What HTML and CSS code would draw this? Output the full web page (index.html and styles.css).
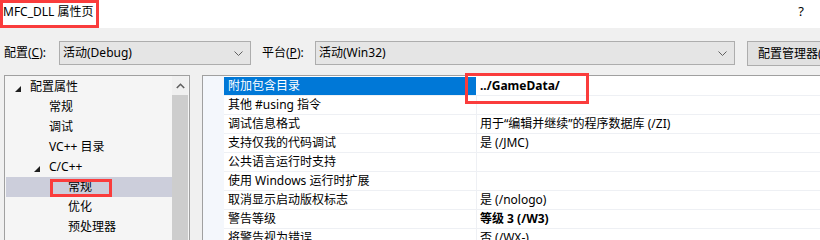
FILE: index.html
```html
<!DOCTYPE html>
<html lang="zh-CN">
<head>
  <meta charset="UTF-8" />
  <title>MFC_DLL 属性页</title>
  <link rel="stylesheet" href="styles.css">
</head>
<body>
  <div class="titlebar">
    <span class="title">MFC_DLL 属性页</span>
    <span class="help">?</span>
  </div>

  <div class="toolbar">
    <label class="field-label first">配置(<u>C</u>):</label>
    <div class="combo config">
      <span>活动(Debug)</span>
      <svg class="chev" width="9" height="5" viewBox="0 0 9 5"><polyline points="0.5,0.5 4.5,4.5 8.5,0.5" fill="none" stroke="#606060" stroke-width="1"/></svg>
    </div>
    <label class="field-label">平台(<u>P</u>):</label>
    <div class="combo platform">
      <span>活动(Win32)</span>
      <svg class="chev" width="9" height="5" viewBox="0 0 9 5"><polyline points="0.5,0.5 4.5,4.5 8.5,0.5" fill="none" stroke="#606060" stroke-width="1"/></svg>
    </div>
    <button class="manager">配置管理器(O)</button>
  </div>

  <div class="main">
    <div class="tree">
      <div class="tree-rows">
        <div class="node lvl0"><span class="exp"></span>配置属性</div>
        <div class="node lvl1">常规</div>
        <div class="node lvl1">调试</div>
        <div class="node lvl1">VC++ 目录</div>
        <div class="node lvl1"><span class="exp"></span>C/C++</div>
        <div class="node lvl2 selected">常规<span class="mark tree-mark"></span></div>
        <div class="node lvl2">优化</div>
        <div class="node lvl2">预处理器</div>
      </div>
      <div class="scrollbar">
        <div class="sb-up">
          <svg width="9" height="6" viewBox="0 0 9 6"><polyline points="0.8,5 4.5,1.3 8.2,5" fill="none" stroke="#606060" stroke-width="1.6"/></svg>
        </div>
        <div class="sb-thumb"></div>
      </div>
    </div>

    <div class="grid">
      <div class="gutter"></div>
      <div class="rows">
        <div class="row">
          <div class="name active">附加包含目录</div>
          <div class="value bold">../GameData/<span class="mark value-mark"></span></div>
        </div>
        <div class="row"><div class="name">其他 #using 指令</div><div class="value"></div></div>
        <div class="row"><div class="name">调试信息格式</div><div class="value">用于“编辑并继续”的程序数据库 (/ZI)</div></div>
        <div class="row"><div class="name">支持仅我的代码调试</div><div class="value">是 (/JMC)</div></div>
        <div class="row"><div class="name">公共语言运行时支持</div><div class="value"></div></div>
        <div class="row"><div class="name">使用 Windows 运行时扩展</div><div class="value"></div></div>
        <div class="row"><div class="name">取消显示启动版权标志</div><div class="value">是 (/nologo)</div></div>
        <div class="row"><div class="name">警告等级</div><div class="value bold">等级 3 (/W3)</div></div>
        <div class="row"><div class="name">将警告视为错误</div><div class="value">否 (/WX-)</div></div>
      </div>
    </div>
  </div>
</body>
</html>
```

FILE: styles.css
```css
body {
  margin: 0;
  width: 820px;
  height: 240px;
  overflow: hidden;
  background: #f0f0f0;
  color: #000;
  font-family: "Noto Sans", "Noto Sans CJK SC", sans-serif;
  font-size: 12px;
  line-height: 16px;
}
.titlebar {
  height: 28px;
  background: #fff;
  display: flex;
  justify-content: space-between;
}
.title {
  box-sizing: border-box;
  width: 99px;
  height: 28px;
  border: 3px solid #fa3c3c;
  padding: 1px 0 0 0;
  white-space: nowrap;
  overflow: hidden;
}
.help {
  padding: 3px 16px 0 0;
  font-size: 13px;
}
.toolbar {
  height: 47px;
  box-sizing: border-box;
  padding-top: 13px;
  display: flex;
  align-items: flex-start;
  white-space: nowrap;
  overflow: hidden;
}
.field-label {
  flex-shrink: 0;
  height: 24px;
  line-height: 24px;
  width: 53px;
}
.field-label.first {
  margin-left: 4px;
  width: 55px;
}
.combo {
  flex-shrink: 0;
  box-sizing: border-box;
  height: 24px;
  border: 1px solid #adadad;
  background: #e5e5e5;
  display: flex;
  align-items: center;
  justify-content: space-between;
  padding: 0 7px 0 3px;
}
.combo.config {
  width: 192px;
  margin-right: 11px;
}
.combo.platform {
  width: 420px;
  margin-right: 12px;
}
.manager {
  box-sizing: border-box;
  height: 25px;
  width: 100px;
  flex-shrink: 0;
  border: 1px solid #adadad;
  background: #e1e1e1;
  font: inherit;
  text-align: left;
  padding: 0 0 0 10px;
  white-space: nowrap;
  overflow: hidden;
}
.main {
  display: flex;
  height: 165px;
}
.tree {
  box-sizing: border-box;
  width: 186px;
  margin-left: 4px;
  border: 1px solid #a0a0a0;
  border-bottom: none;
  background: #f5f5f5;
  display: flex;
  padding: 0 1px 0 1px;
}
.tree-rows {
  width: 166px;
  padding-top: 1px;
}
.node {
  position: relative;
  height: 20px;
  line-height: 20px;
  white-space: nowrap;
}
.lvl0 { padding-left: 24px; }
.lvl1 { padding-left: 43px; }
.lvl2 { padding-left: 62px; }
.exp {
  position: absolute;
  top: 9px;
  width: 0;
  height: 0;
  border-left: 6px solid transparent;
  border-bottom: 6px solid #1e1e1e;
}
.lvl0 .exp { left: 9px; }
.lvl1 .exp { left: 28px; }
.selected {
  background: #cccedb;
}
.mark {
  position: absolute;
  box-sizing: border-box;
  border: 3px solid #fa3c3c;
}
.tree-mark {
  left: 44px;
  top: 2px;
  width: 62px;
  height: 18px;
}
.scrollbar {
  width: 16px;
  display: flex;
  flex-direction: column;
}
.sb-up {
  height: 19px;
  display: flex;
  align-items: center;
  justify-content: center;
  background: #f0f0f0;
}
.sb-thumb {
  flex: 1;
  background: #cdcdcd;
}
.grid {
  flex: 1;
  margin-left: 12px;
  border-top: 1px solid #a0a0a0;
  border-left: 1px solid #a0a0a0;
  background: #fff;
  display: flex;
}
.gutter {
  width: 21px;
  background: #f4f7fc;
}
.rows {
  flex: 1;
  padding-top: 1px;
}
.row {
  display: flex;
  height: 19px;
  box-sizing: border-box;
  border-bottom: 1px solid #eef0f4;
  white-space: nowrap;
}
.name {
  width: 253px;
  padding-left: 4px;
  box-sizing: border-box;
  line-height: 18px;
  border-right: 1px solid #eef0f4;
}
.name.active {
  background: #0078d7;
  color: #fff;
  border-right-color: #fff;
}
.value {
  position: relative;
  flex: 1;
  padding-left: 3px;
  line-height: 18px;
}
.bold {
  font-weight: bold;
}
.value-mark {
  left: -12px;
  top: -4px;
  width: 124px;
  height: 31px;
}
```
